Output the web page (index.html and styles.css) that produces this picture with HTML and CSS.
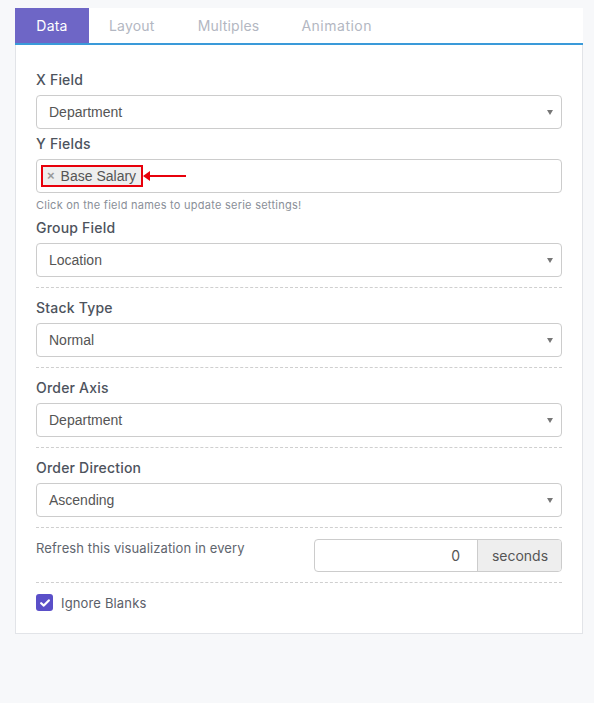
FILE: index.html
```html
<!DOCTYPE html>
<html lang="en">
<head>
    <meta charset="UTF-8">
    <title>Chart settings</title>
    <link rel="stylesheet" href="styles.css">
</head>
<body>
    <div class="settings">
        <!-- tab strip -->
        <ul class="tabs">
            <li class="tab active">Data</li>
            <li class="tab">Layout</li>
            <li class="tab">Multiples</li>
            <li class="tab">Animation</li>
        </ul>

        <div class="tab-body">
            <div class="field">
                <label class="field-label">X Field</label>
                <div class="select">Department</div>
            </div>

            <div class="field">
                <label class="field-label">Y Fields</label>
                <div class="tag-input">
                    <span class="tag"><span class="tag-remove">&times;</span>Base Salary</span>
                    <span class="pointer"></span>
                </div>
                <p class="help">Click on the field names to update serie settings!</p>
            </div>

            <div class="field">
                <label class="field-label">Group Field</label>
                <div class="select">Location</div>
            </div>

            <div class="field">
                <label class="field-label">Stack Type</label>
                <div class="select">Normal</div>
            </div>

            <div class="field">
                <label class="field-label">Order Axis</label>
                <div class="select">Department</div>
            </div>

            <div class="field">
                <label class="field-label">Order Direction</label>
                <div class="select">Ascending</div>
            </div>

            <div class="refresh-row">
                <span class="refresh-text">Refresh this visualization in every</span>
                <div class="input-group">
                    <div class="number-input">0</div>
                    <div class="addon">seconds</div>
                </div>
            </div>

            <div class="check-row">
                <span class="checkbox">
                    <svg width="10" height="8" viewBox="0 0 10 8">
                        <path d="M1.2 4.2 L3.8 6.6 L8.8 1.4" fill="none" stroke="#fff" stroke-width="2.2" stroke-linecap="round" stroke-linejoin="round"/>
                    </svg>
                </span>
                <span class="check-label">Ignore Blanks</span>
            </div>
        </div>
    </div>
</body>
</html>
```

FILE: styles.css
```css
* {
    margin: 0;
    padding: 0;
    box-sizing: border-box;
}

body {
    background: #f7f8fa;
    font-family: Inter, 'Open Sans', sans-serif;
    padding: 8px 11px 0 15px;
    height: 703px;
}

.settings {
    width: 568px;
}

/* tabs */
.tabs {
    list-style: none;
    display: flex;
    height: 37px;
    background: #ffffff;
    border-bottom: 2px solid #3a9ad9;
}

.tab {
    padding: 0 20px;
    line-height: 35px;
    font-size: 14px;
    color: #b3b7c2;
    letter-spacing: 0.2px;
}

.tab.active {
    background: #6e66c6;
    color: #ffffff;
    padding: 0 20px;
    width: 74px;
    text-align: center;
}

.tab:nth-child(3) {
    padding-left: 23px;
}

.tab:nth-child(4) {
    padding-left: 22px;
    letter-spacing: 0.5px;
}

.tab-body {
    background: #ffffff;
    border: 1px solid #e2e4e8;
    border-top: none;
    padding: 25px 20px 22px;
}

/* form fields */
.field {
    padding-bottom: 10px;
    border-bottom: 1px dashed #cfcfcf;
    margin-bottom: 10px;
}

.field:first-child,
.field:nth-child(2) {
    border-bottom: none;
    padding-bottom: 0;
    margin-bottom: 5px;
}

.field:nth-child(6) {
    margin-bottom: 0;
}

.field-label {
    display: block;
    font-size: 14px;
    font-weight: 500;
    line-height: 20px;
    color: #4d535d;
    margin-bottom: 5px;
    letter-spacing: 0.2px;
}

.select,
.tag-input {
    position: relative;
    height: 34px;
    border: 1px solid #cccccc;
    border-radius: 4px;
    font-family: 'Liberation Sans', Arial, sans-serif;
    font-size: 14px;
    color: #555555;
    line-height: 32px;
    padding: 0 12px;
}

.select::after {
    content: "";
    position: absolute;
    right: 8px;
    top: 14px;
    border-left: 3.5px solid transparent;
    border-right: 3.5px solid transparent;
    border-top: 5px solid #777777;
}

.tag-input {
    display: flex;
    align-items: center;
    padding: 0 4px;
}

.tag {
    display: inline-flex;
    align-items: center;
    height: 22px;
    padding: 0 5px 0 4px;
    background: #eeeeee;
    border: 2px solid #e8000b;
    line-height: 18px;
    color: #555555;
}

.tag-remove {
    font-weight: bold;
    color: #999999;
    margin-right: 6px;
    font-size: 13px;
}

/* red callout arrow next to the tag */
.pointer {
    position: relative;
    width: 41px;
    height: 2px;
    background: #e8000b;
    margin-left: 2px;
}

.pointer::before {
    content: "";
    position: absolute;
    left: -2px;
    top: -4px;
    border-top: 5px solid transparent;
    border-bottom: 5px solid transparent;
    border-right: 7px solid #e8000b;
}

.help {
    font-size: 11px;
    color: #8a8f98;
    line-height: 16px;
    margin-top: 4px;
    letter-spacing: 0.25px;
}

/* refresh interval */
.refresh-row {
    display: grid;
    grid-template-columns: 1fr 1fr;
    padding: 11px 0 10px;
    border-bottom: 1px dashed #cfcfcf;
}

.refresh-text {
    font-size: 13px;
    color: #60656e;
    line-height: 18px;
    letter-spacing: 0.1px;
}

.input-group {
    display: flex;
    height: 33px;
    margin-left: 15px;
    border: 1px solid #cccccc;
    border-radius: 4px;
    overflow: hidden;
    font-size: 14px;
    color: #555555;
    line-height: 31px;
}

.number-input {
    flex: 1;
    text-align: right;
    padding-right: 17px;
}

.addon {
    width: 84px;
    background: #eeeeee;
    border-left: 1px solid #cccccc;
    text-align: center;
    padding-left: 1px;
}

/* checkbox */
.check-row {
    display: flex;
    align-items: center;
    gap: 8px;
    margin-top: 11px;
}

.checkbox {
    width: 17px;
    height: 17px;
    border-radius: 3px;
    background: #5a4fc8;
    display: flex;
    align-items: center;
    justify-content: center;
}

.check-label {
    font-size: 13px;
    color: #5b6069;
    letter-spacing: 0.15px;
}
```
